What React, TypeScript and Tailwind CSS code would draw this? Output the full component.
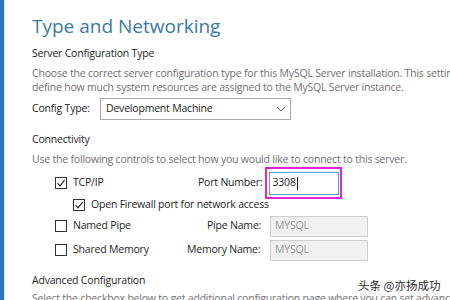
import React from "react";

type BoxProps = { checked?: boolean };

function CheckBox({ checked = false }: BoxProps): React.JSX.Element {
  return (
    <span className="flex h-[12px] w-[12px] shrink-0 items-center justify-center border border-[#333] bg-white">
      {checked ? (
        <svg width="10" height="10" viewBox="0 0 10 10" fill="none">
          <path d="M1.5 5.2 L4 7.8 L8.6 2.2" stroke="#222" strokeWidth="1.1" />
        </svg>
      ) : null}
    </span>
  );
}

function DisabledInput({ value }: { value: string }): React.JSX.Element {
  return (
    <div className="flex h-[21px] w-[98px] items-center border border-[#cfcfcf] bg-[#f0f0f0] pl-[4px] text-[#9a9a9a]">
      {value}
    </div>
  );
}

export default function App(): React.JSX.Element {
  return (
    <div
      className="flex h-[300px] w-[450px] overflow-hidden whitespace-nowrap bg-white text-[10.5px] tracking-[-0.2px] text-[#1e1e1e]"
      style={{ fontFamily: '"Open Sans", "Noto Sans", sans-serif' }}
    >
      <div className="w-[4px] shrink-0 bg-[#2b78b6]" />
      <div className="w-px shrink-0 bg-[#dfe7ee]" />
      <div className="relative flex flex-1 flex-col pl-[27px]">
        <h1 className="mt-[11px] h-[30px] text-[19px] leading-[30px] tracking-normal text-[#3b7aa6]">
          Type and Networking
        </h1>
        <p className="mt-[4px] h-[16px] leading-[16px]">Server Configuration Type</p>
        <div className="mt-[5px] leading-[14px] text-[#707070]">
          <p>Choose the correct server configuration type for this MySQL Server installation. This setting will</p>
          <p>define how much system resources are assigned to the MySQL Server instance.</p>
        </div>

        <div className="mt-[4px] flex h-[22px] items-center">
          <span className="w-[68px]">Config Type:</span>
          <div className="flex h-[22px] w-[191px] items-center justify-between border border-[#a9a9a9] bg-white pl-[5px] pr-[4px]">
            <span>Development Machine</span>
            <svg width="10" height="6" viewBox="0 0 10 6" fill="none">
              <path d="M1 1 L5 5 L9 1" stroke="#666" strokeWidth="1" />
            </svg>
          </div>
        </div>

        <p className="mt-[11px] h-[16px] leading-[16px]">Connectivity</p>
        <p className="mt-[4px] h-[16px] leading-[16px] text-[#707070]">
          Use the following controls to select how you would like to connect to this server.
        </p>

        <div className="mt-[3px] flex h-[26px] items-center">
          <div className="flex w-[166px] items-center gap-[6px] pl-[23px]">
            <CheckBox checked />
            <span>TCP/IP</span>
          </div>
          <span className="w-[67px]">Port Number:</span>
          <div className="flex h-[32px] w-[77px] items-center justify-center border-[2px] border-[#e024d8]">
            <div className="flex h-[23px] w-[70px] items-center border border-[#4a9fd8] bg-white pl-[3px]">
              3308<span className="ml-px h-[13px] w-px bg-[#111]" />
            </div>
          </div>
        </div>

        <div className="mt-[1px] flex h-[22px] items-center gap-[6px] pl-[41px]">
          <CheckBox checked />
          <span>Open Firewall port for network access</span>
        </div>

        <div className="mt-[3px] flex h-[22px] items-center">
          <div className="flex w-[175px] items-center gap-[6px] pl-[23px]">
            <CheckBox />
            <span>Named Pipe</span>
          </div>
          <span className="w-[63px]">Pipe Name:</span>
          <DisabledInput value="MYSQL" />
        </div>

        <div className="mt-[3px] flex h-[22px] items-center">
          <div className="flex w-[155px] items-center gap-[6px] pl-[23px]">
            <CheckBox />
            <span>Shared Memory</span>
          </div>
          <span className="w-[83px]">Memory Name:</span>
          <DisabledInput value="MYSQL" />
        </div>

        <p className="mt-[11px] h-[16px] leading-[16px]">Advanced Configuration</p>
        <p className="mt-[2px] h-[16px] leading-[16px] text-[#707070]">
          Select the checkbox below to get additional configuration page where you can set advanced
        </p>

        <span
          className="absolute left-[353px] top-[277px] text-[11.5px] tracking-normal text-[#2a2a2a] [text-shadow:0_0_2px_#fff]"
          style={{ fontFamily: '"Noto Sans CJK SC", sans-serif' }}
        >
          头条 @亦扬成功
        </span>
      </div>
    </div>
  );
}
